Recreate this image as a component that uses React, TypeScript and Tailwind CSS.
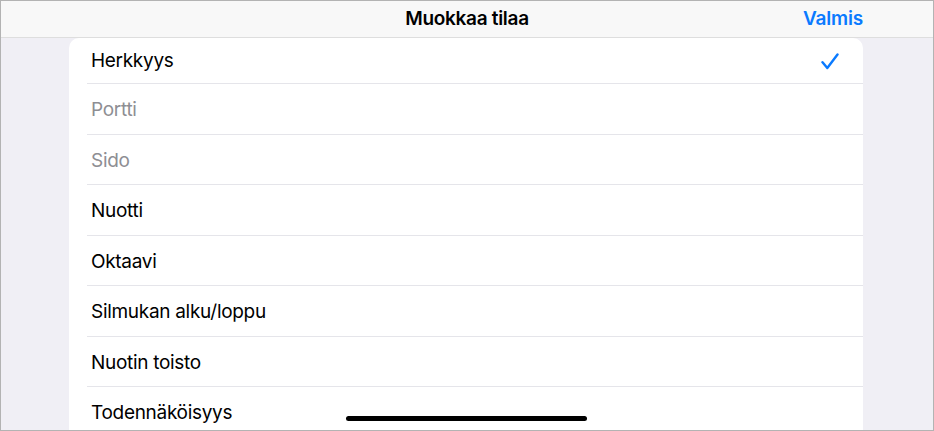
const rows = [
  { label: "Herkkyys", checked: true },
  { label: "Portti", disabled: true },
  { label: "Sido", disabled: true },
  { label: "Nuotti" },
  { label: "Oktaavi" },
  { label: "Silmukan alku/loppu" },
  { label: "Nuotin toisto" },
  { label: "Todennäköisyys" },
]

function Check() {
  return (
    <svg width="18" height="17" viewBox="0 0 18 17" fill="none">
      <path d="M1.5 9.2 L6.3 15 L16.5 1.5" stroke="#0a7aff" strokeWidth="2.4" strokeLinecap="round" strokeLinejoin="round" />
    </svg>
  )
}

export default function App() {
  return (
    <div
      className="relative w-[934px] h-[431px] overflow-hidden border border-[#b3b3b3] bg-[#f0eff5] flex flex-col"
      style={{ fontFamily: "Inter, 'Noto Sans', sans-serif" }}
    >
      <header className="relative h-[37px] shrink-0 bg-[#f8f8f8] border-b border-[#dedede] flex items-center justify-center">
        <span className="text-[19px] font-semibold text-black tracking-[-0.3px]">Muokkaa tilaa</span>
        <button className="absolute right-[70px] top-0 h-full flex items-center text-[19px] font-semibold text-[#0a7aff] tracking-[-0.2px]">
          Valmis
        </button>
      </header>

      <div className="flex-1 pl-[68px]">
        <ul className="w-[794px] h-full bg-white rounded-t-[10px]">
          {rows.map((r, i) => (
            <li key={r.label} className={`pl-[18px] ${i === 0 ? "h-[46px]" : "h-[50.5px]"}`}>
              <div
                className={`h-full border-b border-[#e5e5ea] flex items-center justify-between pl-[4px] pr-[24px] ${
                  i === 0 ? "pt-[1px]" : "pt-[3px]"
                }`}
              >
                <span
                  className={`text-[19px] tracking-[-0.3px] ${r.disabled ? "text-[#8e8e93]" : "text-black"}`}
                >
                  {r.label}
                </span>
                {r.checked && <Check />}
              </div>
            </li>
          ))}
        </ul>
      </div>

      <div className="absolute left-[345px] top-[415px] w-[241px] h-[5px] rounded-full bg-black" />
    </div>
  )
}
